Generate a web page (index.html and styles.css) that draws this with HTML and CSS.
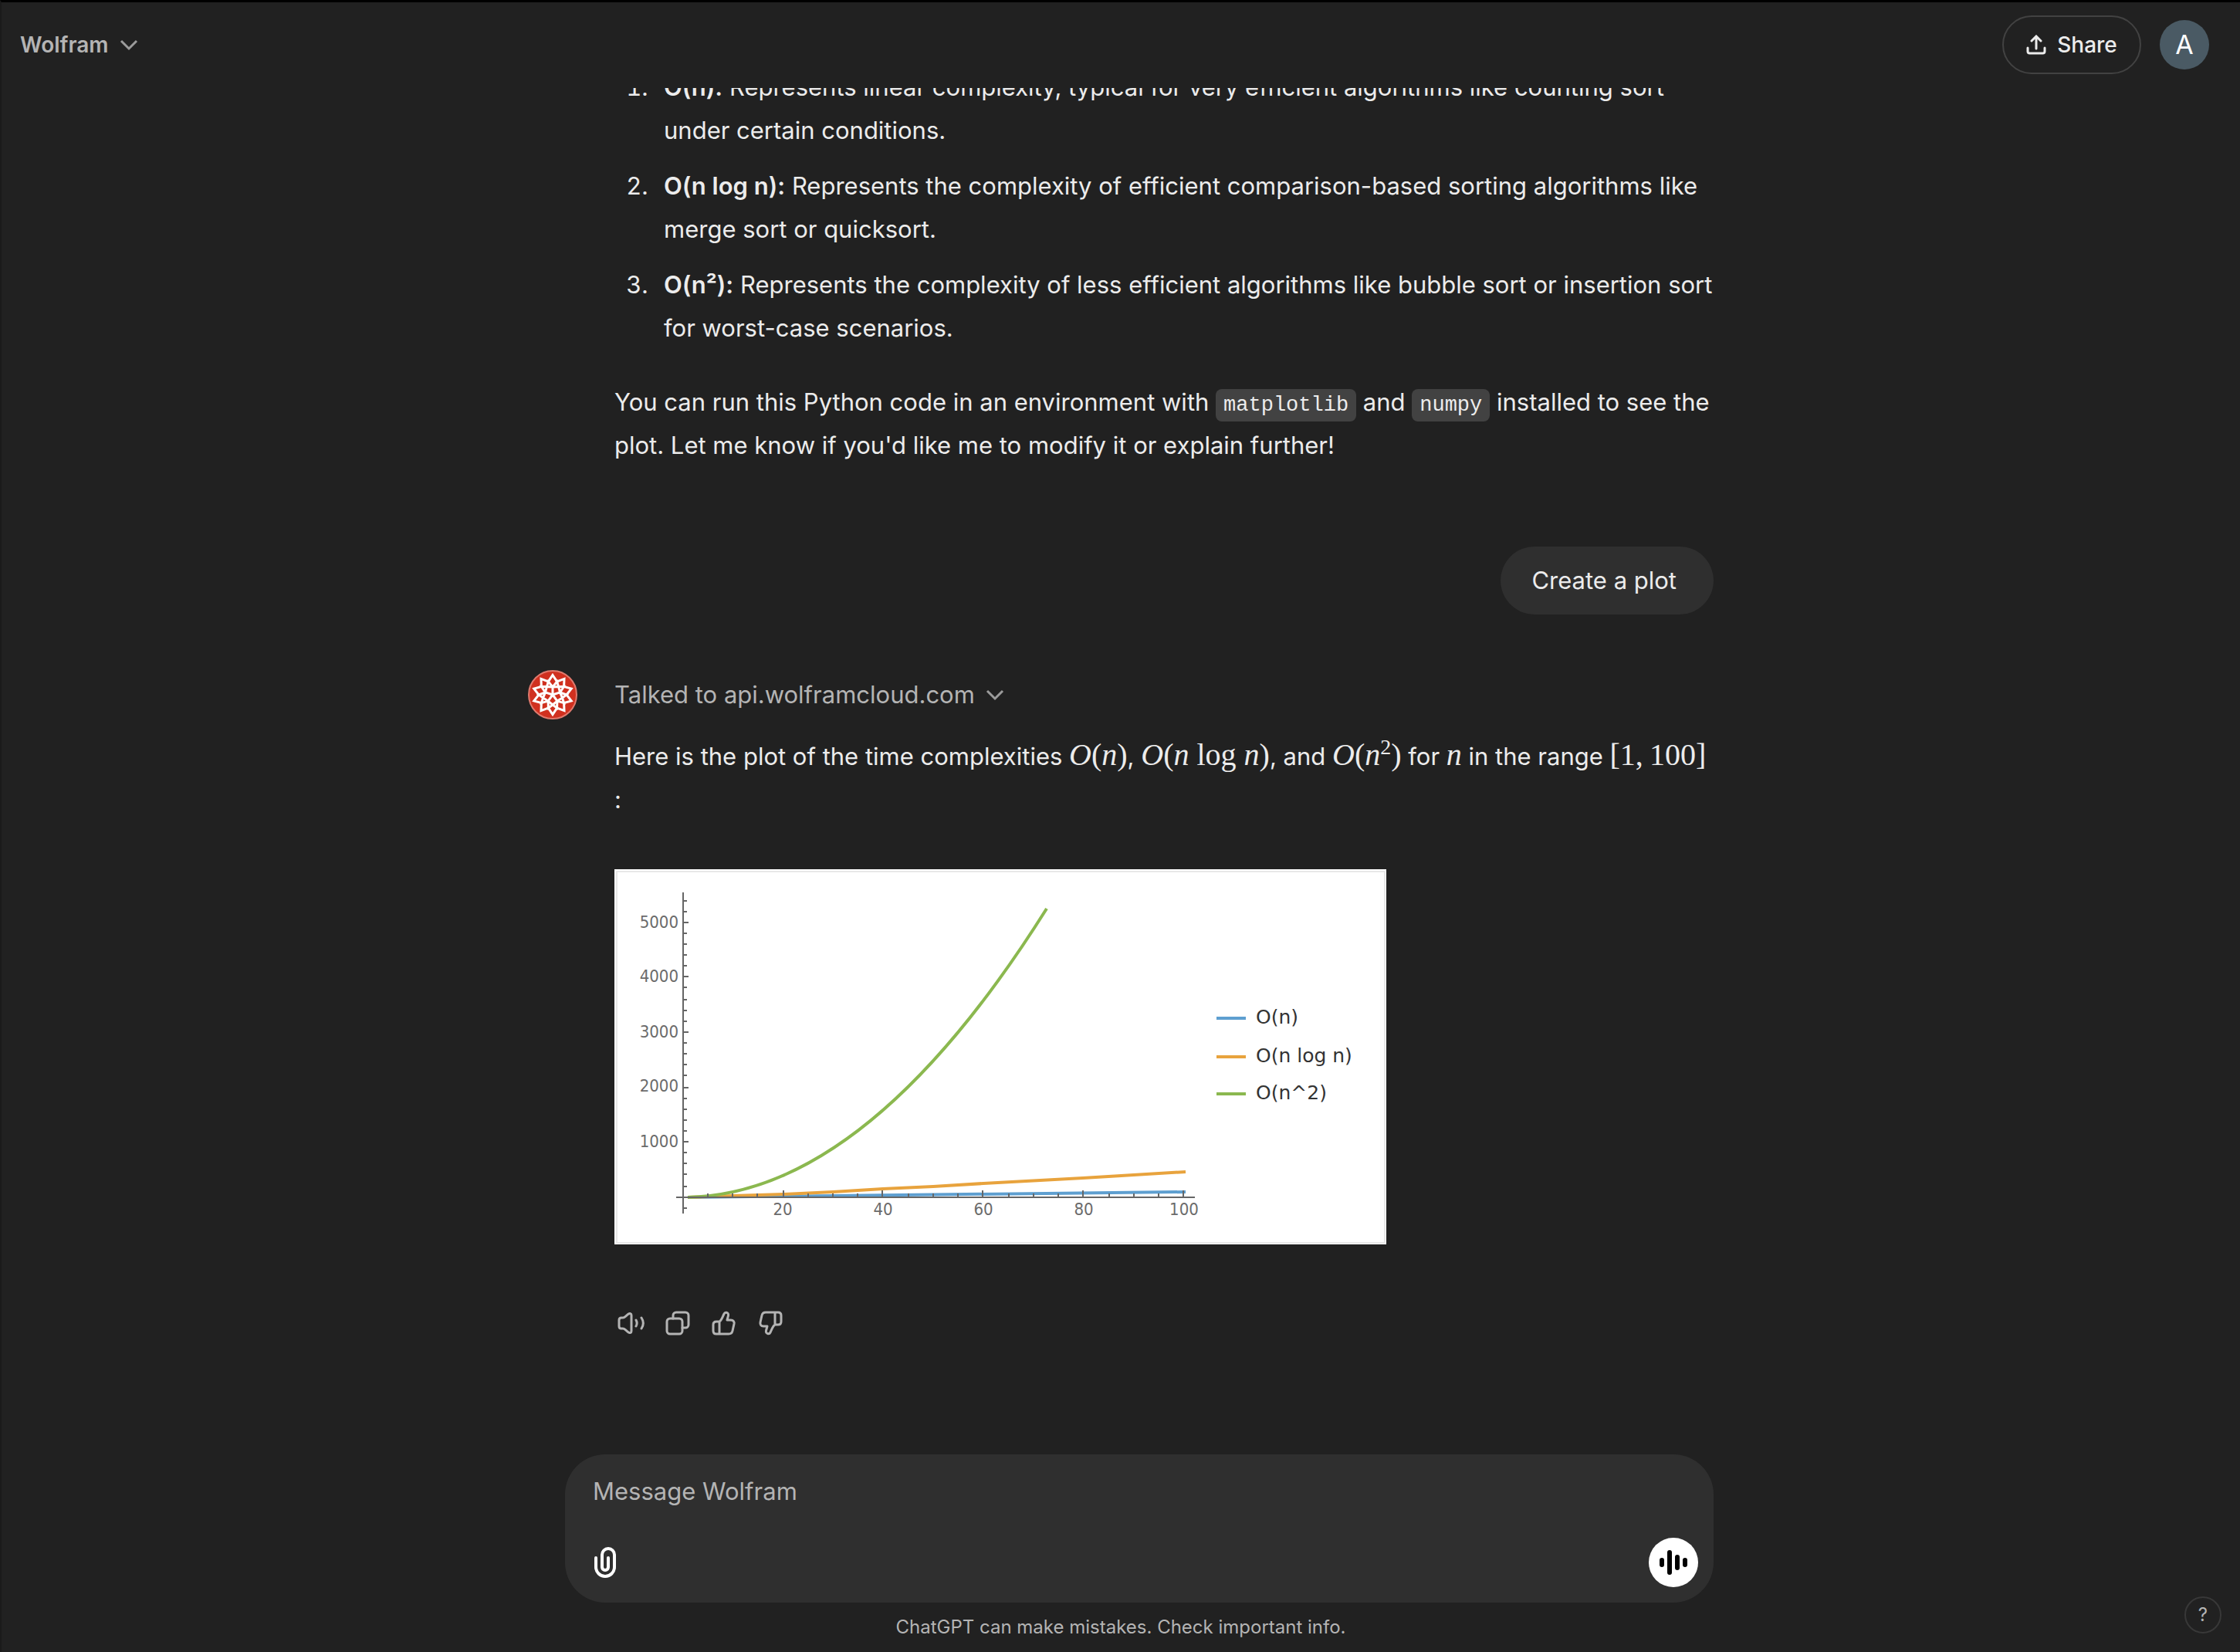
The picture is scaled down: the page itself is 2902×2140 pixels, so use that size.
FILE: index.html
```html
<!DOCTYPE html>
<html lang="en">
<head>
<meta charset="utf-8">
<title>Wolfram</title>
<link rel="stylesheet" href="styles.css">
</head>
<body>
<div class="app">
  <header class="topbar">
    <button class="model" type="button">Wolfram
      <svg class="chevron" viewBox="0 0 24 16" aria-hidden="true"><path d="M2 3l10 10L22 3"/></svg>
    </button>
    <div class="topbar-actions">
      <button class="share" type="button">
        <svg viewBox="0 0 26 26" aria-hidden="true"><path d="M13 18V3M7 8l6-6 6 6M2 17v4.500a2.500 2.500 0 0 0 2.500 2.500h17a2.500 2.500 0 0 0 2.500-2.500V17"/></svg>
        Share
      </button>
      <button class="avatar" type="button" aria-label="Account">A</button>
    </div>
  </header>

  <main class="scroller">
    <div class="thread">
      <section class="reply">
        <ol class="points">
          <li><strong>O(n):</strong> Represents linear complexity, typical for very efficient algorithms like counting sort<br>under certain conditions.</li>
          <li><strong>O(n log n):</strong> Represents the complexity of efficient comparison-based sorting algorithms like<br>merge sort or quicksort.</li>
          <li><strong>O(n²):</strong> Represents the complexity of less efficient algorithms like bubble sort or insertion sort<br>for worst-case scenarios.</li>
        </ol>
        <p>You can run this Python code in an environment with <code>matplotlib</code> and <code>numpy</code> installed to see the<br>plot. Let me know if you'd like me to modify it or explain further!</p>
      </section>

      <p class="question">Create a plot</p>

      <section class="answer">
        <svg class="logo" viewBox="-32 -32 64 64" role="img" aria-label="Wolfram">
          <circle r="31" class="logo-disc"/>
          <g class="logo-lines">
            <path d="M0-25.500L5.600-17.100 15-20.600 14.600-10.600 24.200-7.900 18 0 24.200 7.900 14.600 10.600 15 20.600 5.600 17.100 0 25.500-5.600 17.100-15 20.600-14.600 10.600-24.200 7.900-18 0-24.200-7.900-14.600-10.600-15-20.600-5.600-17.100z"/>
            <path d="M5.600-17.100L7.600-10.500 14.600-10.600 9.500-3.100 18 0 12.400 4 14.600 10.600 5.900 8.100 5.600 17.100 0 13-5.600 17.100-5.900 8.100-14.600 10.600-12.400 4-18 0-9.500-3.100-14.600-10.600-7.600-10.500-5.600-17.100 0-10z"/>
            <path d="M0-10L7.600-10.500 9.500-3.100 12.400 4 5.900 8.100 0 13-5.900 8.100-12.400 4-9.500-3.100-7.600-10.500zM0 0V-10M0 0L9.500-3.100M0 0L5.900 8.100M0 0L-5.900 8.100M0 0L-9.500-3.100"/>
          </g>
        </svg>
        <div class="answer-body">
          <button class="tool" type="button">Talked to api.wolframcloud.com
            <svg class="chevron" viewBox="0 0 24 16" aria-hidden="true"><path d="M2 3l10 10L22 3"/></svg>
          </button>
          <p>Here is the plot of the time complexities <span class="math"><i>O</i>(<i>n</i>)</span>, <span class="math"><i>O</i>(<i>n</i> log <i>n</i>)</span>, and <span class="math"><i>O</i>(<i>n</i><sup>2</sup>)</span> for <span class="math"><i>n</i></span> in the range <span class="math">[1,&thinsp;100]</span><br>:</p>
          <svg class="plot" viewBox="0 0 1000 486" role="img" aria-label="Plot of O(n), O(n log n) and O(n^2)">
            <rect width="1000" height="486" fill="#fff"/>
            <path d="M3 484V3H998V484z" fill="none" stroke="#e8e8e8" stroke-width="2"/>
            <g fill="none" stroke-width="4">
              <path stroke="#5e9fd0" d="M95 425L740 418"/>
              <path stroke="#e8a33d" d="M95 425L154 423 219 421 283 418 348 414 413 411 478 407 607 400 740 392"/>
              <path stroke="#8bb84f" d="M95 425Q328 420 560 51"/>
            </g>
            <g fill="none" stroke="#666" stroke-width="2">
              <path d="M89 30V446M80 425H752"/>
              <path d="M89 69h7M89 139h7M89 211h7M89 283h7M89 353h7M219 425v-9M347 425v-9M477 425v-9M607 425v-9M737 425v-9"/>
              <path d="M89 41h5M89 55h5M89 83h5M89 97h5M89 111h5M89 125h5M89 153h5M89 169h5M89 183h5M89 197h5M89 225h5M89 239h5M89 253h5M89 267h5M89 297h5M89 311h5M89 325h5M89 339h5M89 367h5M89 381h5M89 395h5M89 411h5M89 439h5"/>
              <path d="M121 425v-5M153 425v-5M185 425v-5M251 425v-5M283 425v-5M315 425v-5M381 425v-5M413 425v-5M445 425v-5M511 425v-5M543 425v-5M575 425v-5M641 425v-5M673 425v-5M705 425v-5"/>
            </g>
            <g class="ticks" text-anchor="end">
              <text x="83" y="76">5000</text><text x="83" y="146">4000</text><text x="83" y="218">3000</text><text x="83" y="288">2000</text><text x="83" y="360">1000</text>
            </g>
            <g class="ticks" text-anchor="middle">
              <text x="218" y="448">20</text><text x="348" y="448">40</text><text x="478" y="448">60</text><text x="608" y="448">80</text><text x="738" y="448">100</text>
            </g>
            <path d="M780 193h38" stroke="#5e9fd0" stroke-width="4"/>
            <path d="M780 243h38" stroke="#e8a33d" stroke-width="4"/>
            <path d="M780 291h38" stroke="#8bb84f" stroke-width="4"/>
            <g class="legend"><text x="831" y="200">O(n)</text><text x="831" y="250">O(n log n)</text><text x="831" y="298">O(n^2)</text></g>
          </svg>
          <div class="actions">
            <button type="button" aria-label="Read aloud"><svg viewBox="0 0 36 36"><path d="M2 14c0-2 1-3 3-3h2c1 0 2-.4 3-1.300l4-3.500c2-1.500 4-.8 4 1.600v20.400c0 2.400-2 3.100-4 1.600l-4-3.500c-1-.9-2-1.300-3-1.300H5c-2 0-3-1-3-3zM24 14c1.500 2.600 1.500 5.400 0 8M31 11c3 4.500 3 9.500 0 14"/></svg></button>
            <button type="button" aria-label="Copy"><svg viewBox="0 0 36 36"><rect x="4" y="12" width="20" height="20" rx="4"/><path d="M12 12V8a4 4 0 0 1 4-4h12a4 4 0 0 1 4 4v12a4 4 0 0 1-4 4h-4"/></svg></button>
            <button type="button" aria-label="Good response"><svg viewBox="0 0 36 36"><path d="M12 16c3-2 4-6 6-10 .7-1.500 1.500-2 3-1.700 2.200.5 3 2 2.500 4L22 14h5c3 0 4.500 2 4 5l-2 9c-.6 2.700-2 4-5 4H8c-2.500 0-4-1.500-4-4v-8c0-2.500 1.500-4 4-4zM12 16v16"/></svg></button>
            <button type="button" aria-label="Bad response"><svg viewBox="0 0 36 36"><path d="M24 20c-3 2-4 6-6 10-.7 1.500-1.500 2-3 1.700-2.200-.5-3-2-2.500-4L14 22H9c-3 0-4.500-2-4-5l2-9c.6-2.700 2-4 5-4h16c2.500 0 4 1.500 4 4v8c0 2.500-1.500 4-4 4zM24 20V4"/></svg></button>
          </div>
        </div>
      </section>
    </div>
  </main>

  <div class="dock">
    <form class="composer">
      <input type="text" placeholder="Message Wolfram" aria-label="Message Wolfram">
      <div class="composer-actions">
        <button class="attach" type="button" aria-label="Attach file"><svg viewBox="0 0 28 40"><path d="M2 14v12a12 12 0 0 0 24 0V10a8 8 0 0 0-16 0v16a4 4 0 0 0 8 0V14"/></svg></button>
        <button class="voice" type="button" aria-label="Voice mode"><svg viewBox="0 0 36 32"><path d="M3 13v6M13 3v26M23 9v14M33 13v6"/></svg></button>
      </div>
    </form>
  </div>
  <footer class="note">ChatGPT can make mistakes. Check important info.</footer>
  <button class="help" type="button" aria-label="Help">?</button>
</div>
</body>
</html>
```
FILE: styles.css
```css
* { box-sizing: border-box; }
body {
  margin: 0;
  background: #212121;
  color: #ececec;
  font-family: Inter, "Liberation Sans", sans-serif;
  font-size: 31px;
  line-height: 56px;
}
button, input {
  margin: 0;
  padding: 0;
  border: 0;
  background: none;
  color: inherit;
  font: inherit;
}
svg { display: block; }
p { margin: 0; }

.app {
  position: relative;
  display: flex;
  flex-direction: column;
  height: 100vh;
  border-top: 3px solid #000;
  border-left: 2px solid #1a1a1a;
}

.topbar {
  display: flex;
  align-items: center;
  justify-content: space-between;
  height: 111px;
  padding: 0 40px 2px 24px;
}
.model {
  display: flex;
  align-items: center;
  gap: 14px;
  color: #b4b4b4;
  font-size: 28px;
  font-weight: 600;
}
.chevron {
  width: 24px;
  height: 16px;
  fill: none;
  stroke: #9b9b9b;
  stroke-width: 3;
}
.topbar-actions {
  display: flex;
  align-items: center;
  gap: 24px;
}
.share {
  display: flex;
  align-items: center;
  justify-content: center;
  gap: 14px;
  width: 180px;
  height: 76px;
  border: 2px solid #424242;
  border-radius: 38px;
  font-size: 28px;
  font-weight: 500;
}
.share svg {
  width: 26px;
  height: 26px;
  fill: none;
  stroke: currentColor;
  stroke-width: 3;
  stroke-linecap: round;
}
.avatar {
  width: 64px;
  height: 64px;
  border-radius: 50%;
  background: #4a5a64;
  color: #fff;
  font-size: 34px;
}

.scroller {
  flex: 1;
  min-height: 0;
  display: flex;
  flex-direction: column;
  justify-content: flex-end;
  overflow: hidden;
}
.thread {
  flex: none;
  width: 100%;
  max-width: 1536px;
  margin: 0 auto;
  padding-bottom: 152px;
  display: flex;
  flex-direction: column;
}
.reply {
  padding-left: 112px;
  white-space: nowrap;
}
.points {
  display: flex;
  flex-direction: column;
  gap: 16px;
  margin: 0 0 40px;
  padding-left: 52px;
}
.points li { padding-left: 12px; }
.points strong { font-weight: 600; }
code {
  padding: 6px 10px;
  border-radius: 8px;
  background: #424242;
  font-family: "Liberation Mono", monospace;
  font-size: 27px;
  line-height: 32px;
}
.question {
  align-self: flex-end;
  margin: 103px 0 72px;
  padding: 16px 48px 16px 40px;
  border-radius: 44px;
  background: #2f2f2f;
}
.answer {
  display: grid;
  grid-template-columns: 64px minmax(0, 1fr);
  gap: 48px;
  align-items: start;
}
.logo { width: 64px; height: 64px; }
.logo-disc { fill: #d0301f; stroke: #e0796d; stroke-width: 2; }
.logo-lines { fill: none; stroke: #fff; stroke-width: 3; }
.answer-body p { white-space: nowrap; }
.tool {
  display: flex;
  align-items: center;
  gap: 14px;
  height: 64px;
  margin-bottom: 20px;
  color: #b4b4b4;
}
.math {
  font-family: "Liberation Serif", serif;
  font-size: 40px;
  line-height: 0;
}
.math sup {
  font-size: 28px;
  line-height: 0;
}
.plot {
  width: 1000px;
  max-width: 100%;
  height: auto;
  margin-top: 62px;
}
.ticks {
  fill: #6b6b6b;
  font-family: "DejaVu Sans Condensed", "DejaVu Sans", sans-serif;
  font-size: 22px;
  font-stretch: condensed;
}
.legend {
  fill: #333;
  font-family: "DejaVu Sans", sans-serif;
  font-size: 25px;
}
.actions {
  display: flex;
  gap: 24px;
  margin-top: 84px;
  padding-left: 4px;
}
.actions svg {
  width: 36px;
  height: 36px;
  fill: none;
  stroke: #b4b4b4;
  stroke-width: 3;
  stroke-linecap: round;
  stroke-linejoin: round;
}

.dock {
  width: 100%;
  max-width: 1536px;
  margin: 0 auto;
  padding-left: 48px;
}
.composer {
  display: flex;
  flex-direction: column;
  gap: 32px;
  padding: 20px 20px 20px 36px;
  border-radius: 52px;
  background: #2f2f2f;
}
.composer input {
  height: 56px;
  outline: 0;
}
.composer input::placeholder { color: #b4b4b4; opacity: 1; }
.composer-actions {
  display: flex;
  align-items: center;
  justify-content: space-between;
}
.attach { padding-left: 2px; }
.attach svg {
  width: 28px;
  height: 40px;
  fill: none;
  stroke: #fff;
  stroke-width: 4;
  stroke-linecap: round;
}
.voice {
  display: grid;
  place-items: center;
  width: 64px;
  height: 64px;
  border-radius: 50%;
  background: #fff;
}
.voice svg {
  width: 36px;
  height: 32px;
  stroke: #000;
  stroke-width: 6;
  stroke-linecap: round;
}
.note {
  color: #b4b4b4;
  font-size: 24px;
  line-height: 64px;
  text-align: center;
}
.help {
  position: absolute;
  right: 24px;
  bottom: 24px;
  width: 48px;
  height: 48px;
  border: 2px solid #383838;
  border-radius: 50%;
  color: #b4b4b4;
  font-size: 24px;
  line-height: 44px;
}
```
